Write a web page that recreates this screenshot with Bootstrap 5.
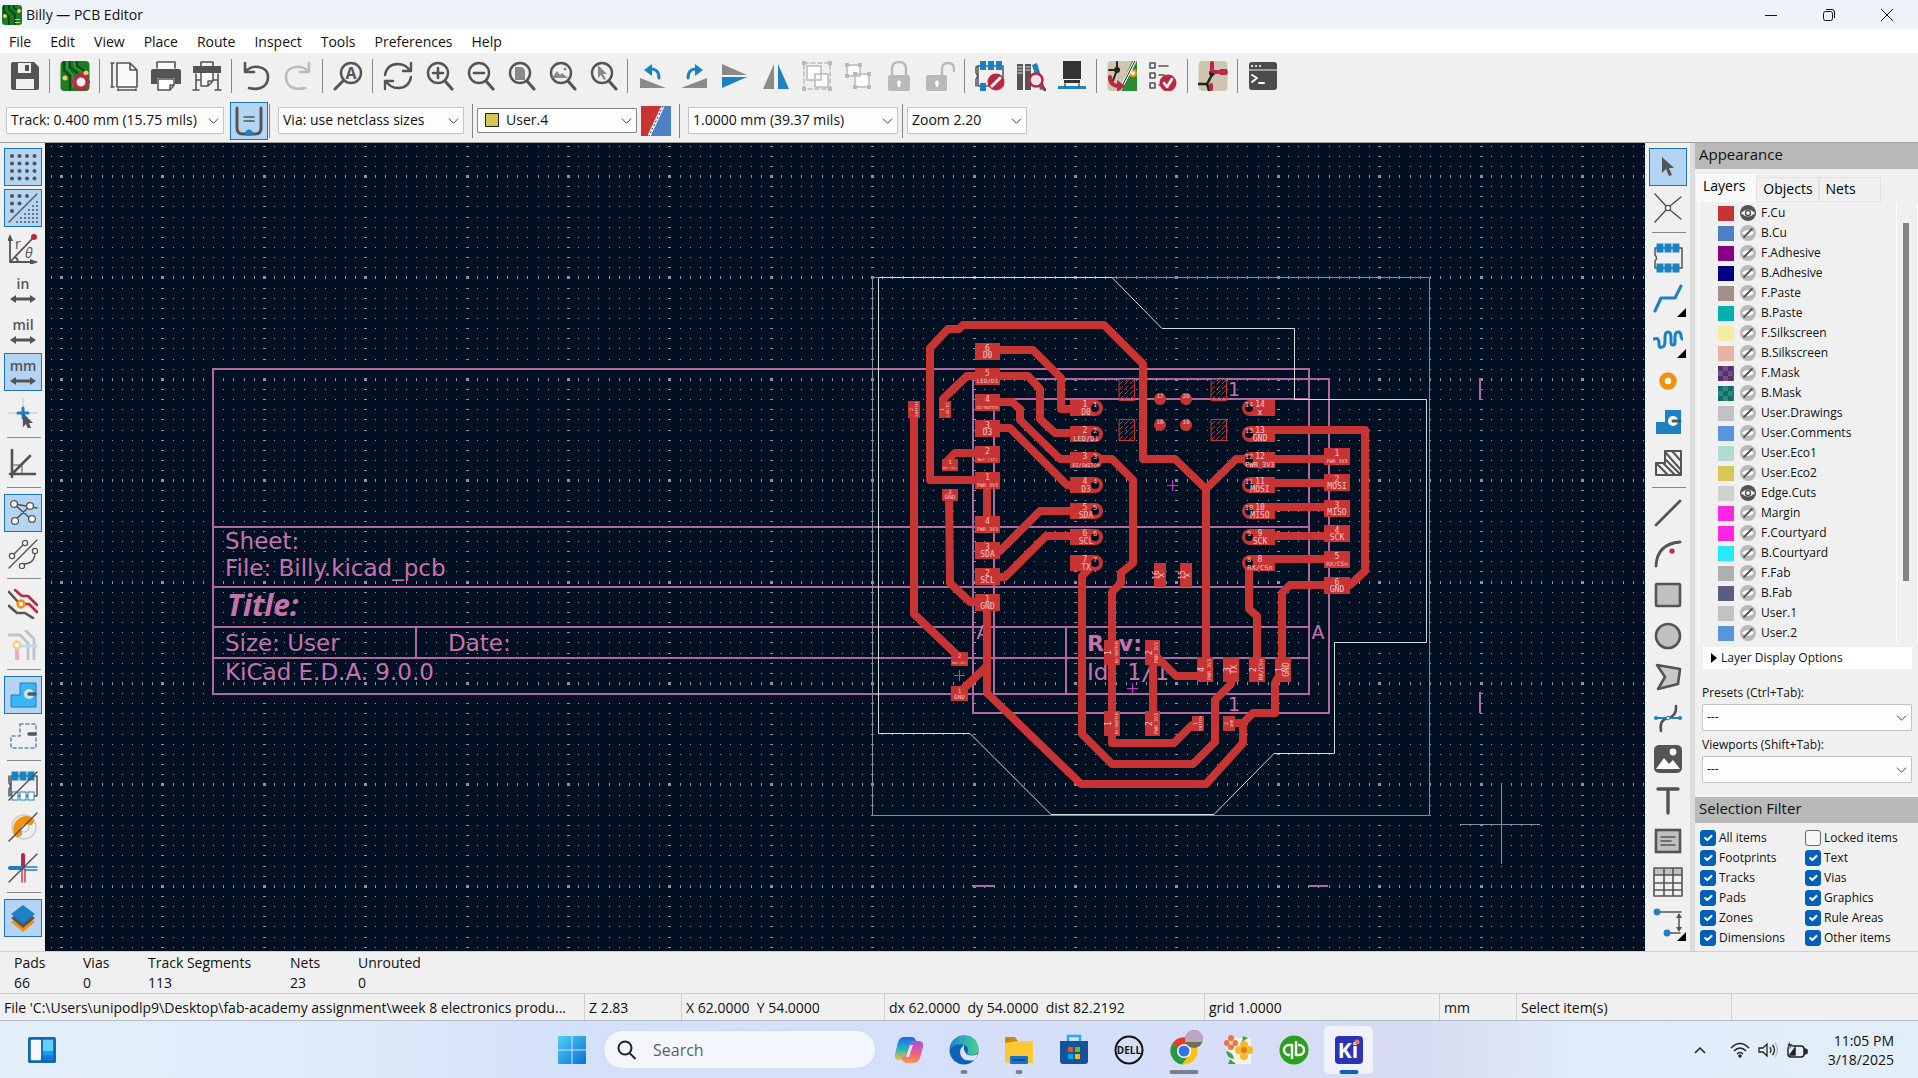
<!DOCTYPE html>
<html lang="en">
<head>
<meta charset="utf-8">
<meta name="viewport" content="width=device-width, initial-scale=1">
<title>Billy — PCB Editor</title>
<link href="https://cdn.jsdelivr.net/npm/bootstrap@5.3.0/dist/css/bootstrap.min.css" rel="stylesheet">
<style>
body{font-family:"Open Sans","Noto Sans",sans-serif;font-size:14px;line-height:20px;color:#111;background:#f0f0f0}
svg{display:block}
.app-window{min-height:100vh}
.title-strip{height:29px;background:#eef3fa;padding:0 2px}
.win-btn{width:58px;height:28px}
.plain-btn{border:0;background:none;padding:0;color:inherit;display:flex;align-items:center;justify-content:center}
.menu-strip{height:24px;background:#fff;padding:1px 0 0 9px;column-gap:19px}
.menu-strip a{color:#111;text-decoration:none}
.toolbars{height:90px;border-bottom:1px solid #a0a0a0}
.tool-row{height:45px;padding:1px 0 0 4px}
.tool-slot{width:41px;height:41px;border:0;background:none;padding:0;display:flex;align-items:center;justify-content:center;flex:none;position:relative}
.tool-slot>span{width:38px;height:38px;display:flex;align-items:center;justify-content:center;border:1px solid transparent}
.tool-slot.is-on>span{background:#b3d4f3;border-color:#1a74bd}
.tool-slot.has-more::after{content:"";position:absolute;right:2px;bottom:2px;border-left:9px solid transparent;border-bottom:9px solid #000}
.sep-v{width:1px;height:34px;background:#858585;margin:0 4px;flex:none}
.sep-h{height:1px;width:34px;background:#858585;margin:4px auto;flex:none}
.combo{--bs-form-select-bg-img:url("data:image/svg+xml,%3csvg xmlns='http://www.w3.org/2000/svg' viewBox='0 0 12 12'%3e%3cpath fill='none' stroke='%23333' d='M1 4l5 5 5-5'/%3e%3c/svg%3e");font-size:14px;line-height:20px;height:27px;padding:2px 24px 3px 4px;border-radius:1px;border-color:#c4c4c4;background-position:right 4px center;background-size:11px 11px;color:#111;background-color:#fdfdfd}
.combo-row2{height:45px;padding-left:6px}
.w-track{width:218px}.w-via{width:186px}.w-layer{width:160px}.w-grid{width:210px}.w-zoom{width:120px}
.w-layer .combo{height:25px;padding:0 24px 2px 28px;border-color:#858585}
.layer-chip{left:8px;top:5px;width:14px;height:14px;background:#d8c850;border:1px solid #222;pointer-events:none}
.side-tools{width:45px;padding:3px 0 0 2px}
.board-view{background:#001023;min-width:0;position:relative;overflow:hidden}
.board-view svg{position:absolute;inset:0;width:100%;height:100%}
.side-panel{width:228px;border-left:5px solid #dcdcdc}
.panel-head{height:26px;background:#b9b9b9;padding:1px 4px;font-size:15px}
.tab-strip{height:33px;padding:6px 0 0 1px}
.tab-strip .tab-btn{border:1px solid #e2e2e2;background:#f0f0f0;padding:0 5px 2px 6px;height:25px}
.tab-strip .tab-btn.active{background:#f9f9f9;border-color:#f9f9f9;height:28px;padding:0 10px 4px 6px}
.layer-area{height:441px;overflow:hidden;margin-left:3px;border-left:2px solid #f9f9f9;padding-top:1px}
.layer-line{height:20px;font-size:12px;padding-left:18px}
.swatch{width:16px;height:15px;flex:none;margin-right:6px}
.swatch.checker{background-image:repeating-conic-gradient(#ffffff28 0 25%,transparent 0 50%);background-size:10px 10px}
.layer-line svg{margin-right:5px;flex:none}
.rail{width:22px;border-left:1px solid #fff;border-right:1px solid #fff;padding:20px 0 60px 6px}
.rail div{width:6px;height:358px;background:#858585}
.disp-opt{background:#fff;margin:4px 6px 4px 8px;height:22px;font-size:12px;padding-left:8px}
.pick-group{padding-top:6px}
.pick label{font-size:12px;line-height:22px}
.pick{padding:3px 6px 0 7px}
.pick .combo{font-size:12px}
.filter-grid{display:grid;grid-template-columns:105px 1fr;padding:5px 0 3px 5px}
.filter-grid .form-check{min-height:20px;height:20px;margin:0;padding:0;display:flex;align-items:center;font-size:12px}
.filter-grid .form-check-input{float:none;margin:0 3px 0 0;width:16px;height:16px;border-color:#666;background-color:#f6f6f6;border-radius:3px}
.filter-grid .form-check-input:checked{background-color:#005fb8;border-color:#005fb8}
.info-strip{height:42px;padding:1px 0 0 14px;border-top:1px solid #d0d0d0}
.status-strip{height:28px;border-top:1px solid #cfcfcf;border-bottom:1px solid #b4bcc8;white-space:nowrap}
.status-strip>div{padding:4px 4px 0;border-right:1px solid #cfcfcf;flex:none}
.task-strip{height:57px;background:linear-gradient(90deg,#e3effa 0,#e1ecfa 15%,#d5e0fa 30%,#d6dffa 60%,#d6dbf1 74%,#e0ecf9 82%,#e2eef9 100%)}
.task-side{width:500px}
.dock{padding-left:12px}
.search-pill{width:273px;height:39px;border-radius:20px;background:#f3f6fd;border:1px solid #d3daea;padding-left:13px}
.search-pill input{border:0;background:none;font-size:16px;width:200px;outline:0;padding:0;color:#555}
.search-pill input::placeholder{color:#5b5f66;opacity:1}
.task-btn{width:49px;height:48px;border-radius:5px;position:relative}
.task-btn.active{background:#eff2fc}
.task-btn i{position:absolute;bottom:0;left:50%;height:4px;border-radius:2px;background:#7b808c;transform:translateX(-50%);width:7px}
.task-btn i.wide{width:29px}
.task-btn.active i{background:#0067c0;width:19px}
.clock{line-height:19px;text-align:right}
.sheet,.sheet text{font-family:"DejaVu Sans",sans-serif}
.sheet .sheet-title{font-family:"Noto Sans",sans-serif}
.sheet .sheet-mono{font-family:"DejaVu Sans Mono",monospace}
.padtxt{font-family:"DejaVu Sans Mono",monospace;fill:#f4c8c8;text-anchor:middle}
</style>
<script src="https://cdn.jsdelivr.net/npm/bootstrap@5.3.0/dist/js/bootstrap.bundle.min.js"></script>
</head>
<body>
<div class="app-window d-flex flex-column">
  <header class="title-strip d-flex align-items-center">
    <svg class="me-1" width="20" height="20" viewBox="0 0 20 20"><rect width="20" height="20" rx="3" fill="#1c7c26"/><path d="M2 0v7l5 5v8M7 0v4l6 6v10M12 0v3l7 5" fill="none" stroke="#0a4712" stroke-width="2"/><g fill="#f2c868"><circle cx="3" cy="11" r="2"/><circle cx="17" cy="6" r="2"/><path d="M13 14h5v1h-5zM13 17h5v1h-5z"/></g></svg>
    <span class="flex-grow-1">Billy — PCB Editor</span>
    <button class="plain-btn win-btn" aria-label="Minimize"><svg width="12" height="12"><path d="M0 6.5h12" stroke="#111"/></svg></button>
    <button class="plain-btn win-btn" aria-label="Restore"><svg width="12" height="12" fill="none" stroke="#111"><rect x=".5" y="2.500" width="9" height="9" rx="2"/><path d="M3 .5h6q2.500 0 2.500 2.500v6"/></svg></button>
    <button class="plain-btn win-btn" aria-label="Close"><svg width="12" height="12"><path d="M0 0l12 12M12 0L0 12" stroke="#111"/></svg></button>
  </header>
  <nav class="menu-strip d-flex align-items-center" aria-label="Main menu">
    <a href="#">File</a><a href="#">Edit</a><a href="#">View</a><a href="#">Place</a><a href="#">Route</a><a href="#">Inspect</a><a href="#">Tools</a><a href="#">Preferences</a><a href="#">Help</a>
  </nav>
  <div class="toolbars">
    <div class="tool-row d-flex align-items-center" data-tools="save | board | page print plot | undo redo | find | refresh zoomin zoomout zoomfit zoomobj zoomsel | rotccw rotcw flipv fliph group ungroup lock unlock | fpedit library chip | update drc | net | console"></div>
    <div class="combo-row2 d-flex align-items-center">
      <select class="form-select combo w-track" aria-label="Track width"><option>Track: 0.400 mm (15.75 mils)</option></select>
      <div class="d-flex ms-1" data-tools="*autotrack"></div>
      <div class="sep-v ms-0"></div>
      <select class="form-select combo w-via ms-1" aria-label="Via size"><option>Via: use netclass sizes</option></select>
      <div class="sep-v ms-2"></div>
      <div class="w-layer position-relative"><select class="form-select combo" aria-label="Active layer"><option>User.4</option></select><span class="layer-chip position-absolute"></span></div>
      <button class="plain-btn ms-1" aria-label="Layer pair"><svg width="30" height="30" viewBox="0 0 30 30"><path d="M0 0h22L8 30H0z" fill="#c83434"/><path d="M22 0h8v30H8z" fill="#4d7fc4"/><path d="M22 0L8 30" stroke="#fff" stroke-width="3"/><path d="M22 0L8 30" stroke="#222" stroke-dasharray="2 2"/></svg></button>
      <div class="sep-v ms-2"></div>
      <select class="form-select combo w-grid ms-1" aria-label="Grid"><option>1.0000 mm (39.37 mils)</option></select>
      <div class="sep-v"></div>
      <select class="form-select combo w-zoom" aria-label="Zoom"><option>Zoom 2.20</option></select>
    </div>
  </div>
  <main class="d-flex flex-grow-1">
    <div class="side-tools d-flex flex-column" data-tools="*grid *gridover polar inch mil *mm cursor | angle | *ratsnest curved | contrast1 contrast2 | *zonefill zoneout | padout viaout trackout | *layers" data-dir="v"></div>
    <section class="board-view flex-grow-1" aria-label="Board">
      <svg id="board"><g transform="translate(-45 -143)">
        <g id="gridLayer" fill="#8496a5" shape-rendering="crispEdges"></g>
        <g class="sheet" fill="none" stroke="#b566a0" stroke-width="2">
          <path d="M213 369H1309V694H213zM213 527H1309M213 587H1309M213 627H1309M213 658H1309M416 627V658M1066 627V694"/>
          <path d="M973 379H1329V713H973zM994 399H1309M994 399V694M1480 378V400M1480 692V713M972 886H994M1308 886H1328"/>
        </g>
        <g class="sheet" fill="#c872ab" font-size="23">
          <text x="225" y="549">Sheet:</text><text x="225" y="576">File: Billy.kicad_pcb</text>
          <text class="sheet-title" x="227" y="616" font-size="30" font-weight="bold" font-style="italic">Title:</text>
          <text x="225" y="651">Size: User</text><text x="448" y="651">Date:</text><text x="225" y="680">KiCad E.D.A. 9.0.0</text>
          <text x="1087" y="651" font-size="22" font-weight="bold">Rev:</text><text x="1087" y="680">Id:</text><text class="sheet-mono" x="1127" y="680">1/1</text>
          <g font-size="19" text-anchor="middle"><text x="983" y="639">A</text><text x="1318" y="639">A</text><text x="1234" y="396">1</text><text x="1234" y="711">1</text></g>
        </g>
        <g fill="none" stroke="#848f96"><path d="M872.5 277.500H1429.500V815.500H872.500z"/><path d="M1460 824.500H1540M1501.500 783V864"/></g>
        <path d="M878.500 277.500H1112L1162 328.500H1294.500V399.500H1426.500V642.500H1334.500V753.500H1274L1214 814.500H1051L970 733.500H878.500z" fill="none" stroke="#d0dcdc"/>
        <g fill="none" stroke="#c83434" stroke-width="8" stroke-linejoin="round" stroke-linecap="round">
          <path d="M986 480H930V348L948 329H959L963 325H1104L1143 364V459H1175L1206 489V670M1206 489L1236 459H1337"/>
          <path d="M986 350H1033L1061 378V409H1075M987 376H1028L1040 389V419L1055 433H1075M987 376H967L943 399V410M987 402H1012L1020 409V420L1060 459H1075M987 428H1010L1067 485H1080M987 453H955L948 460V465M987 480V524"/>
          <path d="M914 410V614L959 657M949 495L950 583L970 602H987V693L1081 784H1206L1243 743V723L1253 713H1275V683L1282 670V593L1290 585H1350L1365 571V430H1258M1243 723H1228M987 666L960 692"/>
          <path d="M987 551H1000L1040 511H1075M987 577H1005L1046 536H1075M1100 459H1112L1133 480V563L1121 573V583L1112 592V743H1174L1192 725H1198M1092 566L1082 576V734L1112 764H1193L1215 742V700L1231 684V670M1153 653L1176 676H1205M1153 653V723M1249 567V609L1257 616V670M1258 483H1337M1258 507H1337M1258 536H1337M1258 559H1337"/>
        </g>
        <g id="pads" fill="#c83434"></g>
        <g fill="none" stroke="#d030d0"><path d="M1167 485.500h11M1172.500 480v11M954 675.500h11M959.500 670v11M1127 688.500h11M1132.500 683v11"/></g>
      </g></svg>
    </section>
    <div class="side-tools d-flex flex-column" data-tools="*arrow ratlocal | footprint route+ meander+ via zone keepout | line arc rect circle poly bezier image text textbox table dim+" data-dir="v"></div>
    <aside class="side-panel d-flex flex-column">
      <div class="panel-head">Appearance</div>
      <div class="tab-strip d-flex align-items-end" role="tablist"><button class="tab-btn active" role="tab">Layers</button><button class="tab-btn" role="tab">Objects</button><button class="tab-btn pe-4" role="tab">Nets</button></div>
      <div class="layer-area d-flex"><div id="layerList" class="flex-grow-1"></div><div class="rail"><div></div></div></div>
      <a href="#" class="disp-opt d-flex align-items-center text-reset text-decoration-none"><svg width="6" height="10" class="me-1"><path d="M0 0l6 5-6 5z"/></svg>Layer Display Options</a>
      <div class="pick-group">
        <div class="pick"><label for="presets">Presets (Ctrl+Tab):</label><select id="presets" class="form-select combo"><option>---</option></select></div>
        <div class="pick"><label for="views">Viewports (Shift+Tab):</label><select id="views" class="form-select combo"><option>---</option></select></div>
      </div>
      <div class="panel-head mt-auto">Selection Filter</div>
      <div class="filter-grid" id="filters"></div>
    </aside>
  </main>
  <div class="info-strip d-flex">
    <div style="width:69px">Pads<br>66</div><div style="width:65px">Vias<br>0</div><div style="width:142px">Track Segments<br>113</div><div style="width:68px">Nets<br>23</div><div>Unrouted<br>0</div>
  </div>
  <div class="status-strip d-flex">
    <div class="ps-1" style="width:585px">File 'C:\Users\unipodlp9\Desktop\fab-academy assignment\week 8 electronics produ...</div><div style="width:97px">Z 2.83</div><div style="width:203px">X 62.0000&nbsp; Y 54.0000</div><div style="width:320px">dx 62.0000&nbsp; dy 54.0000&nbsp; dist 82.2192</div><div style="width:235px">grid 1.0000</div><div style="width:77px">mm</div><div style="width:215px">Select item(s)</div>
  </div>
  <footer class="task-strip d-flex align-items-center justify-content-between">
    <div class="task-side ps-4"><button class="plain-btn ms-1" aria-label="Widgets"><svg width="28" height="28" viewBox="0 0 30 28"><rect width="30" height="28" rx="2" fill="#1466b8"/><rect x="3" y="3" width="11" height="22" rx="1" fill="#f4f8fc"/><rect x="16" y="3" width="11" height="12" fill="#62d2fc"/><rect x="16" y="15" width="11" height="5" fill="#1e9cec"/><rect x="16" y="20" width="11" height="5" fill="#0b7bd8"/></svg></button></div>
    <div class="dock d-flex align-items-center" id="dock">
      <button class="plain-btn me-3" aria-label="Start"><svg width="30" height="30" viewBox="0 0 30 30"><defs><linearGradient id="wg" x2="1" y2="1"><stop stop-color="#4fd0fb"/><stop offset="1" stop-color="#0573d1"/></linearGradient></defs><path fill="url(#wg)" d="M1 2q0-1 1-1h12.500v13.500H1zM15.500 1H28q1 0 1 1v12.500H15.500zM1 15.500h13.500V29H2q-1 0-1-1zM15.500 15.500H29V28q0 1-1 1H15.500z"/></svg></button>
      <div class="search-pill d-flex align-items-center me-1"><svg class="me-3" width="20" height="20" fill="none" stroke="#222" stroke-width="2"><circle cx="8" cy="8" r="6.500"/><path d="M12.500 13l6 6"/></svg><input type="search" placeholder="Search" aria-label="Search"></div>
    </div>
    <div class="task-side d-flex align-items-center justify-content-end pe-4">
      <svg width="12" height="8" class="me-4" fill="none" stroke="#222" stroke-width="1.500"><path d="M1 7l5-5 5 5"/></svg>
      <svg width="20" height="16" class="me-2" fill="none" stroke="#222" stroke-width="1.500"><path d="M1 6q9-9 18 0M4 9q6-6 12 0M7 12q3-3 6 0"/><circle cx="10" cy="14" r="1" fill="#222"/></svg>
      <svg width="20" height="16" class="me-2" fill="none" stroke="#222" stroke-width="1.300"><path d="M1 6h4l4-4v12l-4-4H1zM12 5q2 3 0 6M14.500 3q4 5 0 10"/><path d="M17 1q5 7 0 14" stroke="#b4bac6"/></svg>
      <svg width="22" height="18" class="me-3" fill="none" stroke="#222" stroke-width="1.500"><rect x="2" y="5" width="16" height="11" rx="3"/><path d="M19 8v5l2-1V9z" fill="#222"/><path d="M4 14l5-7v7z" fill="#222"/><path d="M4 0L1 5h3l-1 4 4-6H4z" fill="#222" stroke="#e2eef9" stroke-width=".5"/></svg>
      <div class="clock ms-1">11:05 PM<br>3/18/2025</div>
    </div>
  </footer>
</div>
<script>
const D='#545454',B='#1a81c4',R='#bf2641',L='#b9b9b9',O='#f2920c';
const S=(w,d,c=D,x='')=>`<path d="${d}" fill="none" stroke="${c}" stroke-width="${w}" stroke-linecap="round" stroke-linejoin="round" ${x}/>`;
const F=(d,c=D,x='')=>`<path d="${d}" fill="${c}" ${x}/>`;
const C=(x,y,r,f='none',s='none',w=1)=>`<circle cx="${x}" cy="${y}" r="${r}" fill="${f}" stroke="${s}" stroke-width="${w}"/>`;
const T=(t,y,s=14)=>`<text x="15" y="${y}" font-size="${s}" text-anchor="middle" fill="${D}" font-weight="600">${t}</text>`;
const glass=C(14,12,10,'none',D,2.4)+S(3,'M21 20l7 8');
const dots=(x0,y0,n,m,g,r,ok=()=>1)=>{let s='';for(let j=0;j<m;j++)for(let i=0;i<n;i++)if(ok(i,j))s+=C(x0+i*g,y0+j*g,r,D);return s};
const pcb='<rect width="29" height="30" x=".5" rx="4" fill="#1c7c26"/>'+S(2,'M4 1v8l6 6v14M10 1v5l7 6M17 1v4l8 5','#0a4712')+S(1,'M7 1v7l6 6v12M14 1l1 5 8 6','#4aa654');
const net='<rect width="29" height="30" x=".5" rx="4" fill="#cfc4ae"/>';
const blueFill='M12 3h16v24H3V15h9z';
const dblArrow=F('M2 24l6-4v2.500h14V20l6 4-6 4v-2.500H8V28z');
const fpPads=(y,f=B)=>[4,12,20].map(x=>`<rect x="${x}" y="${y}" width="6" height="8" fill="${f}" stroke="${B}"/>`).join('');
const I={
save:F('M1 3q0-2 2-2h21l5 5v21q0 2-2 2H3q-2 0-2-2z')+F('M8 2h13v10H8zM6 18h18v10H6z','#f0f0f0')+F('M15 4h4v6h-4z'),
board:pcb+C(5,17,2.5,'#f2c868')+C(26,12,2.5,'#f2c868')+C(21,21,6,'#f7f2f3',R,3)+S(3,'M21 12v2M21 28v2M12 21h2M28 21h2M15 15l1 1M27 27l-1-1M27 15l-1 1M15 27l1-1',R),
page:F('M7 2h13l7 7v17H7z','#fafafa')+S(1.6,'M7 2h13l7 7v17H7zM20 2v7h7M2 2v24M1 2h3M1 26h3M8 29h18M8 28v2M26 28v2',D),
print:F('M6 1h18v7H6z','#fafafa')+S(1.6,'M6 7V1h18v6')+F('M2 8h26q2 0 2 2v13h-6v-6H6v6H0V10q0-2 2-2z')+F('M7 18h16v6l-4 5H7z','#fff')+S(1.5,'M7 18h16v6l-4 5H7zM19 29v-5h4'),
plot:S(1.6,'M9 5V1h12v4')+F('M1 5h28v7H1z')+S(1.6,'M4 13v16M1 29h6M26 13v16M23 29h6M4 19h5M21 19h5')+F('M9 12h12v8l-5 5H9z','#fff')+S(1.5,'M9 12v13h7l5-5v-8M16 25v-5h5'),
undo:S(2.6,'M3 2v9h9M3 11C9 3 26 4 26 16S14 29 7 27'),
redo:S(2.6,'M26 2v9h-9M26 11C20 3 3 4 3 16S15 29 22 27','#bcbcbc'),
find:C(18,12,10,'none',D,2.4)+S(3,'M10 20l-8 8')+`<text x="18" y="18" font-size="16" font-weight="bold" text-anchor="middle" fill="${D}">A</text>`,
refresh:S(2.4,'M2 14Q4 3 15 3q8 0 12 7M28 2v8h-8M28 16q-2 11-13 11-8 0-12-7M2 28v-8h8'),
zoomin:glass+S(2.6,'M9 12h10M14 7v10'),zoomout:glass+S(2.6,'M9 12h10'),
zoomfit:glass+F('M9 6h7l3 3v10H9z','#8a8a8a'),zoomobj:glass+F('M5 17l5-7 3 4 2-2 6 5z','#8a8a8a')+C(18,8,1.5,'#8a8a8a'),zoomsel:glass+F('M10 4l9 9h-4l3 5-2 1-3-5-3 3z','#8a8a8a'),
rotccw:F('M2 17l26 10H2z','#8a8a8a')+S(3,'M11 8Q21 7 21 17',B)+F('M6 9l8-6v12z',B),
rotcw:F('M28 17L2 27h26z','#8a8a8a')+S(3,'M19 8Q9 7 9 17',B)+F('M24 9l-8-6v12z',B),
flipv:F('M2 3v11h25z','#8a8a8a')+F('M2 27V16h25z',B),fliph:F('M2 28h11V3z','#8a8a8a')+F('M28 28H17V3z',B),
group:S(1.5,'M2 2h26v26H2z',L,'stroke-dasharray="4 3"')+'<g fill="#fff" stroke="#b9b9b9" stroke-width="1.5"><path d="M5 5h14v14H5zM13 13h13v13H13z"/></g>'+F('M0 0h4v4H0zM26 0h4v4h-4zM0 26h4v4H0zM26 26h4v4h-4z',L),
ungroup:'<g fill="#fff" stroke="#b9b9b9" stroke-width="1.5"><path d="M4 4h13v11H4zM12 13h14v13H12z"/></g>'+F('M2 2h4v4H2zM15 2h4v4h-4zM2 13h4v4H2zM10 11h4v4h-4zM24 11h4v4h-4zM10 24h4v4h-4zM24 24h4v4h-4z',L),
lock:S(2.4,'M8 14V8q0-7 7-7t7 7v6',L)+'<rect x="4" y="14" width="22" height="16" rx="2" fill="#b9b9b9"/>'+F('M15 19l2 2-1 5h-2l-1-5z','#fff'),
unlock:S(2.4,'M17 14V8q0-6 6-6t6 6v2',L)+'<rect x="1" y="14" width="21" height="16" rx="2" fill="#b9b9b9"/>'+F('M12 19l2 2-1 5h-2l-1-5z','#fff'),
fpedit:S(1.5,'M3 5h25v20H3V5M3 5q-2 0-2 2v5q3 3 0 6v7')+F('M5 0h6v9H5zM13 0h6v9h-6zM21 0h6v9h-6zM5 22h6v8H5z',B)+C(21,21,8.5,R)+S(3,'M17 25l8-8','#fff'),
library:F('M1 3h6v26H1zM9 3h6v26H9z')+S(1,'M2 6h4M2 9h4M2 12h4M10 6h4M10 9h4','#ddd')+F('M16 4l5-2 8 26-5 1z',B)+C(20,19,6.500,'#e8e8ec',R,2.500)+S(3,'M25 24l4 5',R),
chip:F('M6 0h18v18H6z','#333')+F('M7 19h16v3H7z','#333')+F('M1 25h28v3H1z',B)+S(1.5,'M8 23v2M22 23v2'),
update:net+F('M30 0v30H12L25 0z','#2a8a32')+S(2,'M10 1v8l-8 0M10 9l-5 13','#222')+C(10,9,3,'#222')+C(26,12,4,O)+C(26,12,2,'#fff')+S(3,'M28 0L13 29','#fff')+S(1,'M28 0L13 29','#222')+S(4,'M3 16q0 10 11 9',R)+F('M10 19l8 6-8 6z',R),
drc:S(1.6,'M2 2h5v5H2zM2 12h5v5H2zM2 22h5v5H2zM11 5h9M11 14h5M11 24h2')+C(20,22,8.5,R)+S(2.6,'M16 22l3 4 5-8','#fff'),
net:net+S(2.6,'M1 23h8l6-11M9 23l2 6','#222')+C(14,12,3,'#222')+S(4,'M14 2v8M17 11h11M13 28v-4',R)+F('M22 8h7v6h-7z',R),
console:'<rect x="1" y="1" width="28" height="28" rx="3" fill="#4c4c4c"/>'+S(1.2,'M1 9h28','#eee')+S(2,'M4 5h.1M8 5h.1M12 5h.1M4 14l5 3-5 4M11 22h5','#fff'),
autotrack:S(3,'M3 2v20q0 6 6 6h12q6 0 6-6V2')+S(1.5,'M10 11h10M10 15h10')+C(15,27,3.5,B),
grid:dots(4,4,4,4,7.5,2),gridover:dots(4,3,3,3,7.500,2,(i,j)=>i+j<3)+dots(9,9,6,6,4,1,(i,j)=>i+j>4)+S(1.2,'M1 29L29 1'),
polar:S(1.8,'M2 28V4M2 28h26M2 28L25 4M7 23q3 2 3 5')+F('M-1 7l3-7 3 7zM22 25l8 3-8 3z')+C(26,3,3,R)+`<text x="7" y="15" font-size="14" fill="${D}">r</text><text x="17" y="24" font-size="14" font-style="italic" fill="${D}">θ</text>`,
inch:T('in',14)+dblArrow,mil:T('mil',14)+dblArrow,mm:T('mm',14)+dblArrow,
cursor:S(.6,'M15 0v30M0 15h30','#aaa')+S(3,'M15 10v10M10 15h10',B)+F('M15 15l10 10h-4l2 5-3 1-2-5-3 3z'),
angle:S(2.6,'M4 2v27M2 26h25M4 26L22 8')+S(1,'M5 17h9v9'),
ratsnest:S(1.500,'M6 6l17 15M22 8L6 23M7 6l22 4')+C(6,6,3.4,'#fff',D,1.3)+C(22,8,3.4,'#fff',D,1.3)+C(7,23,3.4,'#fff',D,1.3)+C(24,21,3.4,'#fff',D,1.3),
curved:S(1.400,'M1 29L29 1M5 16L16 5M27 13q0 12-12 12')+C(4,17,2.6,'#fff',D,1.3)+C(17,4,2.6,'#fff',D,1.3)+C(27,12,2.6,'#fff',D,1.3)+C(14,27,2.6,'#fff',D,1.3),
contrast1:S(2.6,'M7 1l7 6h6l9 9M15 15h6l8 8',R)+S(2.6,'M1 3l10 11M1 17l8 7h8l8 5')+C(13,15,3.4,'#fff',O,2.6),
contrast2:S(3,'M1 5h11l8 8v16M18 1l8 8v20','#c4c4c4')+S(3,'M10 16h19','#b7dcef')+S(4,'M9 18v11','#e7afbb')+C(9,15,3.400,'#fff','#f8cf90',2.6),
zonefill:F(blueFill,'#3ab4f2',`stroke="${B}"`)+C(21,14,5,'#c8e4f8')+S(3.500,'M21 14h6'),
zoneout:S(1.5,blueFill,'#4a94c4','stroke-dasharray="3 3"')+S(3.500,'M21 13h6'),
padout:S(1.500,'M3 5h26v20H3V5M1 5v7q3 3 0 6v7')+fpPads(1)+fpPads(21,'#fff')+S(1.5,'M1 29L29 1'),
viaout:C(16,15,12,'none','#ccc',1.5)+C(16,15,5,'none','#ccc',1.5)+S(8,'M10 21A9 9 0 0 1 22 9',O)+S(1.5,'M1 29L29 1'),
trackout:S(4,'M15 2v12',R)+S(4,'M2 15h12',B)+S(1.3,'M14 16v13M17 16v13',R)+S(1.3,'M16 14h13M16 17h13',B)+S(1.5,'M1 29L29 1'),
layers:F('M3 19l12-8 12 8-12 10z',O)+F('M3 15l12-8 12 8-12 10z','#555')+F('M3 11L15 2l12 9-12 10z',B),
arrow:F('M9 5l12 11h-5l3 7-3 1-3-7-4 4z'),
ratlocal:S(1.500,'M2 1l11 12M28 4L17 13M2 29l11-12M28 26l-11-9')+C(15,15,2.6,'#fff',D,1.3),
footprint:S(1.5,'M3 5h26v20H2v-7q3-3 0-6V5z')+fpPads(1)+fpPads(21),
route:S(3,'M2 27l6-13h14l6-12',B),meander:S(3,'M1 14q5-2 5 4t3 4q3 0 3-6V12q0-5 3-5t3 5v5q0 3 2 3t2-3v-5q0-5 3-5t3 4q0 4 4 3',B),
via:C(15,15,6,'#fff',O,5.500),zone:F(blueFill,B)+C(20,14,5,'#fff')+S(3,'M20 14h7'),
keepout:S(2,blueFill)+S(2,'M12 4l16 18M12 11l15 15M4 16l10 10M10 15l11 11M19 3l9 10'),
line:S(2.8,'M3 27L27 3'),arc:S(2.8,'M3 27Q4 5 27 3')+C(19,12,2.6,R),
rect:'<rect x="3" y="4" width="24" height="22" rx="1" fill="#c0c0c0" stroke="#545454" stroke-width="2.6"/>',circle:C(15,15,12,'#c0c0c0',D,2.6),
poly:F('M4 3l23 4-2 15-20 5 7-12z','#c8c8c8','stroke="#545454" stroke-width="2.600" stroke-linejoin="round"'),
bezier:S(2.600,'M8 28Q6 17 15 15t8-12')+S(2,'M3 15h24',B)+C(3,15,2,B)+C(27,15,2,B)+C(15,15,1.800,'#fff',B),
image:'<rect x="1" y="1" width="28" height="28" rx="5" fill="#545454"/>'+F('M3 25l8-11 5 6 4-4 7 9z','#fff')+C(20,8,3.400,'#fff'),
text:S(3.4,'M5 4h20M15 4v24'),textbox:'<rect x="3" y="4" width="24" height="22" fill="#c0c0c0" stroke="#545454" stroke-width="2.6"/>'+S(1.5,'M8 11h14M8 15h10M8 19h14'),
table:F('M1 1h28v7H1z','#c0c0c0')+S(1.600,'M1 1h28v28H1zM1 8h28M1 16h28M1 23h28M11 1v28M20 1v28'),
dim:S(1.500,'M4 4h24M15 25h12M26 7v15')+F('M26 5l3 5h-6zM26 24l3-5h-6z')+C(4,4,3.400,B)+C(14,25,3.400,B)};
document.querySelectorAll('[data-tools]').forEach(el=>{
  const v=el.dataset.dir==='v';
  el.innerHTML=el.dataset.tools.split(/\s+/).map(k=>{
    if(k==='|')return `<div class="${v?'sep-h':'sep-v'}"></div>`;
    const on=k[0]==='*',more=k.endsWith('+'),n=k.replace(/[*+]/g,'');
    return `<button class="tool-slot${on?' is-on':''}${more?' has-more':''}" aria-label="${n}"><span><svg width="30" height="30" viewBox="0 0 30 30">${I[n]}</svg></span></button>`}).join('');
});
const layers=[['F.Cu','#c83434',1],['B.Cu','#4d7fc4'],['F.Adhesive','#840084'],['B.Adhesive','#000084'],['F.Paste','#a49088'],['B.Paste','#00b0b0'],['F.Silkscreen','#f2eda1'],['B.Silkscreen','#e8b2a7'],['F.Mask','#57306b'],['B.Mask','#0a7068'],['User.Drawings','#c2c2c2'],['User.Comments','#5994dc'],['User.Eco1','#b4dbd2'],['User.Eco2','#d8c852'],['Edge.Cuts','#d0d2cd',1],['Margin','#ff26e2'],['F.Courtyard','#ff26e2'],['B.Courtyard','#26e9ff'],['F.Fab','#afafaf'],['B.Fab','#585d84'],['User.1','#c2c2c2'],['User.2','#5994dc']];
document.getElementById('layerList').innerHTML=layers.map(([n,c,on])=>`<div class="layer-line d-flex align-items-center"><span class="swatch${n.endsWith('Mask')?' checker':''}" style="background-color:${c}"></span><svg width="16" height="16">${on?C(8,8,8,D)+F('M1 8q7-7 14 0-7 7-14 0z','#fff')+C(8,8,2.500,'#fff',D,1.500):C(8,8,8,L)+F('M2 8q6-6 12 0-6 6-12 0z','#fff')+S(1.800,'M4 12l8-8')}</svg><span>${n}</span></div>`).join('');
document.getElementById('filters').innerHTML=['All items','Locked items','Footprints','Text','Tracks','Vias','Pads','Graphics','Zones','Rule Areas','Dimensions','Other items'].map((n,i)=>`<div class="form-check"><input class="form-check-input" type="checkbox" id="f${i}"${i===1?'':' checked'}><label for="f${i}">${n}</label></div>`).join('');

/* grid: one dot per millimetre, heavier every tenth */
(function(){
  const step=10.14,x0=61,y0=176;let d='';
  const w=document.getElementById('board').clientWidth+45,h=document.getElementById('board').clientHeight+143;
  for(let i=-2;;i++){const x=Math.round(x0+i*step);if(x>w)break;
    for(let j=-4;;j++){const y=Math.round(y0+j*step);if(y>h)break;
      const mx=i%10===0,my=j%10===0,a=mx?1:0,b=my?1:0;
      d+=`M${x-a} ${y-b}h${1+2*a}v${1+2*b}h-${1+2*a}z`;}}
  document.getElementById('gridLayer').innerHTML=`<path d="${d}"/>`;
})();
/* pads */
(function(){
  let s='';
  const t=(x,y,v,z,r)=>`<text class="padtxt" x="${x}" y="${y}" font-size="${z}"${r?` transform="rotate(-90 ${x} ${y})"`:''}>${v}</text>`;
  const size=v=>v.length<5?8:v.length<7?6:v.length<8?5:4;
  const pad=(x,y,w,h,n,v)=>{s+=`<rect x="${x}" y="${y}" width="${w}" height="${h}"/>`+t(x+w/2,y+h/2-1,n,h<16?6:8)+t(x+w/2,y+h-2,v,w<20?(v.length<4?6:3):size(v))};
  const vpad=(x,y,w,h,n,v)=>{s+=`<rect x="${x}" y="${y}" width="${w}" height="${h}"/>`+t(x+w/2-1,y+h/2,n,h>20?8:5,1)+t(x+w-2,y+h/2,v,h>20?size(v):4,1)};
  [[343,6,'D0'],[368,5,'LED/D1'],[394,4,'D2/SWITCH'],[420,3,'D3'],[446,2,'Net-(J2-Pin_2)'],[472,1,'PWR_3V3'],[516,4,'PWR_3V3'],[542,3,'SDA'],[568,2,'SCL'],[594,1,'GND']].forEach(p=>pad(975,p[0],25,17,p[1],p[2].length>10?'Net-(J2)':p[2]));
  ['PWR_3V3','MOSI','MISO','SCK','RX/CSn','GND'].forEach((v,i)=>pad(1324,Math.round(448+i*25.8),26,17,i+1,v));
  ['D0','LED/D1','D2/SWITCH','D3','SDA','SCL','TX'].forEach((v,i)=>{const y=Math.round(408+i*25.8);
    s+=`<path d="M1070 ${y-8}H1095a8 8 0 0 1 0 16H1070z"/>`+C(1095,y,4,'#001023')+t(1085,y-1,i+1,8)+t(1095,y-1,i+1,7)+t(1086,y+7,v,v.length>7?5:v.length>4?7:8)});
  ['x','GND','PWR_3V3','MOSI','MISO','SCK','RX/CSn'].forEach((v,i)=>{const y=Math.round(408+i*25.8);
    s+=`<path d="M1275 ${y-8}H1250a8 8 0 0 0 0 16H1275z"/>`+C(1249,y,4,'#001023')+t(1260,y-1,14-i,8)+t(1249,y-1,14-i,7)+t(1260,y+7,v,v.length>4?7:8)});
  [[1160,399,17],[1186,399,20],[1160,425,18],[1186,425,19]].forEach(p=>s+=C(p[0],p[1],6,'#c83434')+t(p[0],p[1]-1,p[2],6));
  [[1119,379],[1119,419],[1211,379],[1211,419]].forEach(([x,y])=>s+=S(1,`M${x}.5 ${y}.5h15v21h-15z`,'#c83434')+S(1,`M${x} ${y+6}l6-6M${x} ${y+11}l11-11M${x} ${y+16}l15-15M${x} ${y+21}l15-15M${x+5} ${y+21}l10-10M${x+10} ${y+21}l5-5`,'#c83434','stroke-dasharray="5 3"'));
  vpad(1154,563,12,24,'16','x');vpad(1180,563,12,24,'15','x');
  vpad(908,401,12,17,2,'SWITCH');vpad(939,401,12,17,1,'LED/D1');
  pad(942,459,16,12,1,'Net-(D1)');pad(942,489,16,12,2,'GND');pad(951,652,17,14,2,'Net-(R1)');pad(951,686,17,15,1,'GND');
  vpad(1104,640,16,25,1,'D2/SWITCH');vpad(1145,640,15,25,2,'PWR_3V3');
  vpad(1197,657,16,25,4,'PWR_3V3');vpad(1223,657,16,25,3,'TX');vpad(1249,657,16,25,2,'RX/CSn');vpad(1275,657,16,25,1,'GND');
  vpad(1104,711,16,25,1,'D2/SWITCH');vpad(1145,711,15,25,2,'PWR_3V3');vpad(1192,716,12,15,1,'SWITCH');vpad(1223,716,12,15,2,'GND');
  document.getElementById('pads').innerHTML=s;
})();
/* taskbar apps */
(function(){
  const A=[
  ['Copilot','<defs><linearGradient id="ca" x2="0" y2="1"><stop stop-color="#1f66e5"/><stop offset=".5" stop-color="#22b0c8"/><stop offset="1" stop-color="#f0c72c"/></linearGradient><linearGradient id="cb" x2="0" y2="1"><stop stop-color="#a352e8"/><stop offset=".55" stop-color="#ee5a8a"/><stop offset="1" stop-color="#fb9a50"/></linearGradient></defs><path d="M10 2h7q4 0 5 4l1 3q-5 0-6 5l-3 8q-1 3-4 3H5q-5 0-4-6l3-12q2-5 6-5z" fill="url(#ca)"/><path d="M20 28h-7q-4 0-5-4l-1-2q5 0 6-4l3-9q1-3 4-3h5q5 0 4 6l-3 11q-2 5-6 5z" fill="url(#cb)"/><path d="M16 10h3l-4 12h-3z" fill="#dfe6fa"/>'],
  ['Edge','<defs><linearGradient id="eg"><stop stop-color="#1c86dc"/><stop offset="1" stop-color="#45d48c"/></linearGradient></defs><circle cx="15" cy="15" r="14.500" fill="#1160b4"/><path d="M1 15Q2 1 15 .5T29.500 14q0 6-7 6-5 0-4-3 2-5-3-7Q6 7 1 15z" fill="url(#eg)"/><path d="M15 10q-6 5-3 11t14 4l3-6q-10 4-13-2-2-3-1-7z" fill="#dde4f8"/>','<i></i>'],
  ['File Explorer','<path d="M1 3q0-1 1-1h9l3 4h15v8H1z" fill="#c78a14"/><path d="M1 8l12-2h16v22H1z" fill="#fcc836"/><rect x="6" y="21" width="18" height="8" rx="1" fill="#1473c8"/><path d="M9 25h12" stroke="#0a4f94" stroke-width="2"/>','<i></i>'],
  ['Store','<path d="M9 7V1h12v6" fill="none" stroke="#2aa9ee" stroke-width="2.500"/><path d="M1 6h28v20q0 3-3 3H4q-3 0-3-3z" fill="#12549c"/><path d="M9 12h5v5H9z" fill="#f25022"/><path d="M16 12h5v5h-5z" fill="#7fba00"/><path d="M9 19h5v5H9z" fill="#00a4ef"/><path d="M16 19h5v5h-5z" fill="#ffb900"/>'],
  ['Dell','<circle cx="15" cy="15" r="13.500" fill="none" stroke="#111" stroke-width="2"/><text x="15" y="19" font-size="10" font-weight="bold" text-anchor="middle" fill="#111">DELL</text>'],
  ['Chrome','<circle cx="15" cy="16" r="13.500" fill="#fbc116"/><path d="M15 16L3 9A14 14 0 0 1 27 9z" fill="#e33b2e"/><path d="M15 16L3 9A14 14 0 0 0 13 29.500l7-10z" fill="#229a48"/><circle cx="15" cy="16" r="7" fill="#fff"/><circle cx="15" cy="16" r="5.500" fill="#2f74e4"/><circle cx="25" cy="4" r="9" fill="#6f6f56"/><path d="M16 4a9 9 0 0 1 18 0z" fill="#b9a6c4"/><path d="M16 4h18v3H16z" fill="#a9b3b0"/>','<i class="wide"></i>'],
  ['Photos','<path d="M5 3h22v26H5z" fill="#f2f4ea"/><g fill="#f0704c"><circle cx="7" cy="3" r="3"/><circle cx="3" cy="8" r="3"/><circle cx="11" cy="8" r="3"/><circle cx="7" cy="12" r="3"/></g><circle cx="7" cy="8" r="2" fill="#fce08c"/><g fill="#f8b82c"><circle cx="20" cy="10" r="4"/><circle cx="15" cy="15" r="4"/><circle cx="25" cy="15" r="4"/><circle cx="20" cy="21" r="4"/></g><circle cx="20" cy="15" r="3" fill="#e87a20"/><path d="M2 16q8 2 8 8-7-1-8-8zM19 1l5 2-6 4zM6 24l6 5H4z" fill="#46a04a"/>'],
  ['QuickBooks','<circle cx="15" cy="15" r="14.500" fill="#2ca01c"/><g fill="none" stroke="#fff" stroke-width="2.400"><path d="M13 10h-3a5 5 0 0 0 0 10h1M13 9v15M17 20h3a5 5 0 0 0 0-10h-1M17 21V6"/></g>'],
  ['KiCad','<rect x="1" y="1" width="28" height="28" rx="4" fill="#2a34b8"/><text x="14" y="23" font-size="21" font-weight="bold" text-anchor="middle" fill="#fff">Ki</text><circle cx="23" cy="7" r="2.500" fill="#f08040"/>','<i></i>',1]];
  document.getElementById('dock').insertAdjacentHTML('beforeend','<div class="d-flex ms-1" style="column-gap:6px">'+A.map(([n,g,m='',on])=>`<button class="plain-btn task-btn${on?' active':''}" aria-label="${n}"><svg width="30" height="30" viewBox="0 0 30 30" overflow="visible">${g}</svg>${m}</button>`).join('')+'</div>');
})();
</script>
</body>
</html>
